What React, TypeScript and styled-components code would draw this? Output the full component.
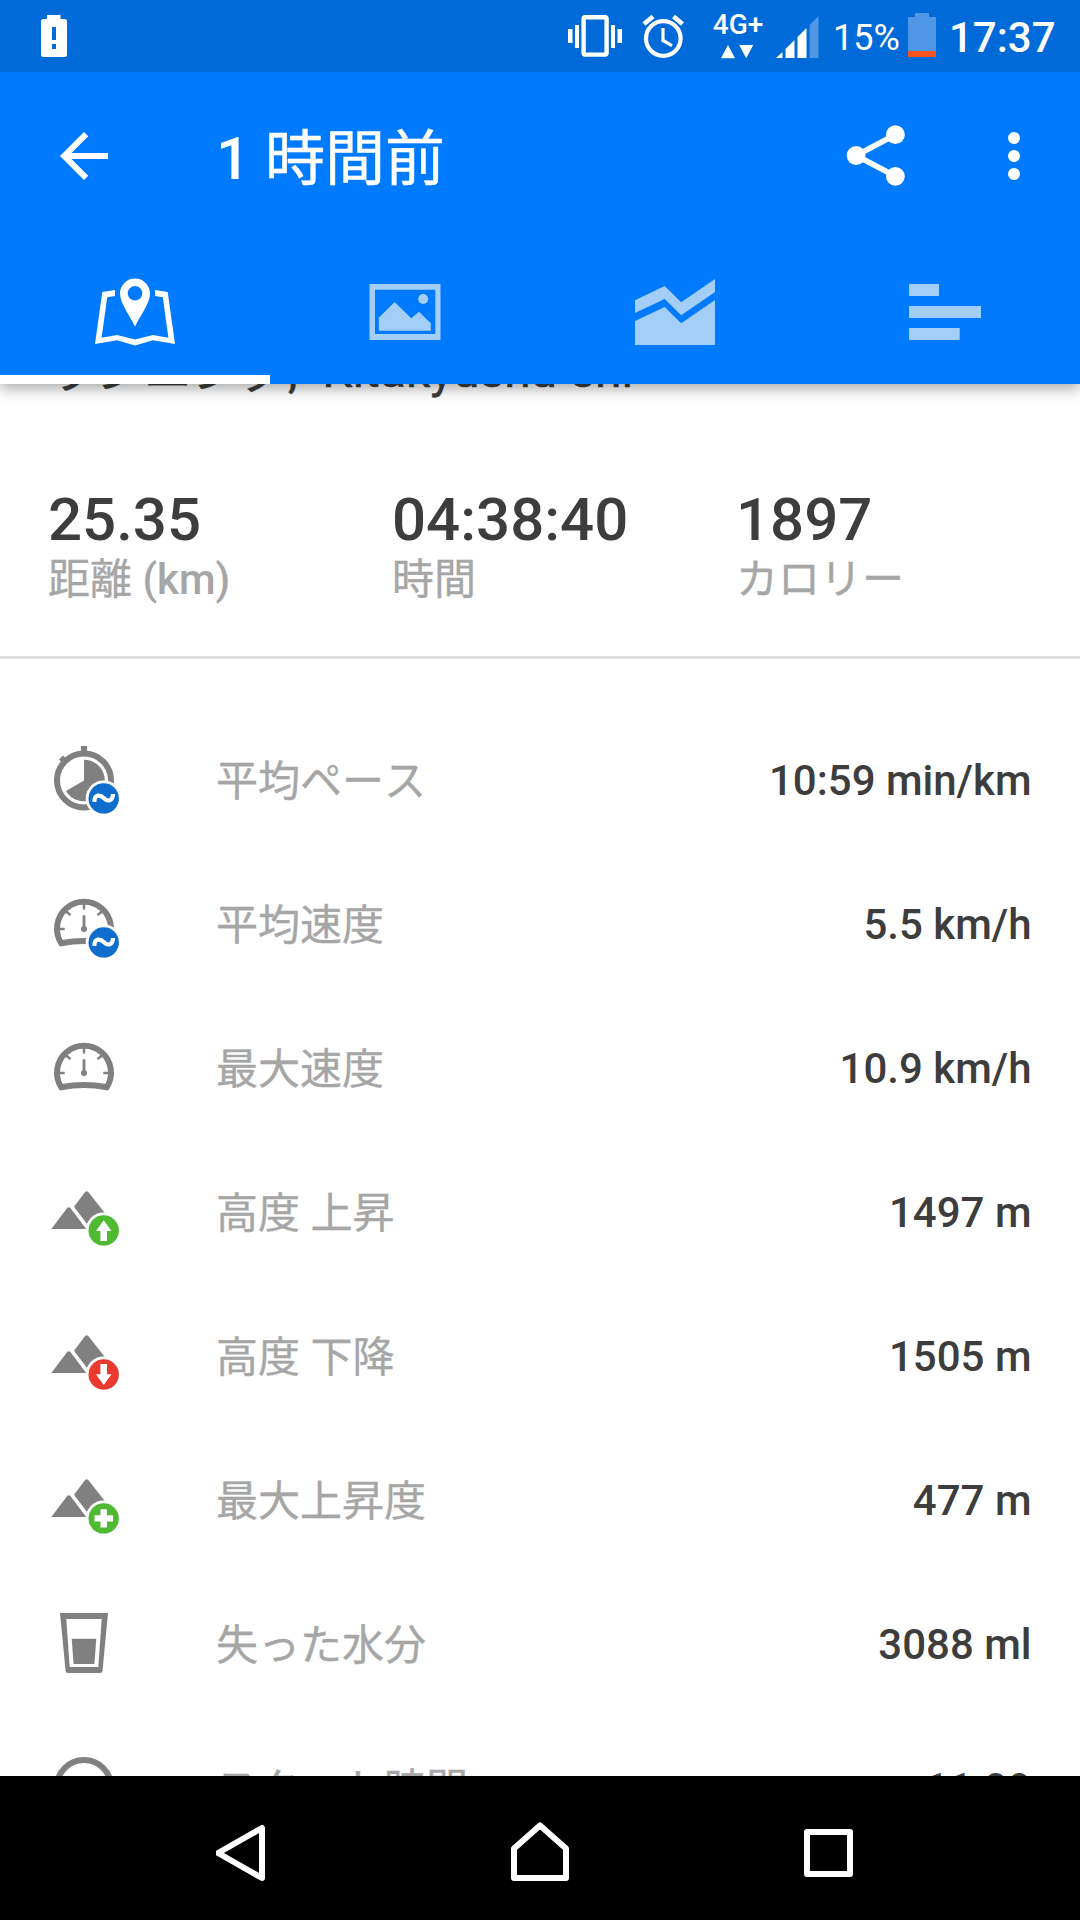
import React from "react";
import styled, { createGlobalStyle } from "styled-components";

const GlobalStyle = createGlobalStyle`
  html, body { margin: 0; padding: 0; background: #fff; }
  * { box-sizing: border-box; }
  svg { display: block; flex: none; }
`;

const Screen = styled.div`
  width: 1080px;
  height: 1920px;
  display: flex;
  flex-direction: column;
  overflow: hidden;
  background: #fff;
  color: #3d3d3d;
  font-family: Roboto, "Noto Sans CJK JP", sans-serif;
  font-weight: 500;
`;

const Header = styled.header`
  flex: none;
  position: relative;
  z-index: 1;
  background: #007aff;
  color: #fff;
  box-shadow: 0 5px 13px rgba(0, 0, 0, 0.33);
`;

const StatusBar = styled.div`
  height: 72px;
  display: flex;
  align-items: flex-start;
  justify-content: space-between;
  padding: 0 25px 0 36px;
  background: #006ad9;
`;

const StatusIcons = styled.div`
  display: flex;
  align-items: flex-start;
`;

const Alerts = styled.div`
  display: flex;
  gap: 18px;
`;

const Network = styled.div`
  width: 50px;
  height: 72px;
  margin: 0 13px 0 28px;
  padding-top: 10px;
  display: flex;
  flex-direction: column;
  align-items: center;
  font-size: 28px;
  line-height: 30px;
`;

const NetworkName = styled.span`
  height: 35px;
  white-space: nowrap;
`;

const BatteryLevel = styled.span`
  margin-left: 13px;
  width: 75px;
  padding-top: 2px;
  font-size: 36px;
  font-weight: 400;
  line-height: 72px;
`;

const Clock = styled.span`
  width: 106px;
  margin-left: 13px;
  padding-top: 2px;
  font-size: 42px;
  line-height: 72px;
`;

const Toolbar = styled.div`
  height: 168px;
  display: flex;
  align-items: center;
  padding: 0 30px 0 48px;
`;

const Title = styled.h1`
  flex: 1;
  margin: 0 0 0 96px;
  padding-top: 6px;
  font-size: 60px;
  font-weight: 500;
  line-height: 72px;
`;

const Actions = styled.div`
  display: flex;
  gap: 60px;
`;

const Tabs = styled.nav`
  height: 144px;
  display: grid;
  grid-template-columns: repeat(4, 1fr);
`;

const Tab = styled.div<{ $active?: boolean }>`
  display: flex;
  align-items: center;
  justify-content: center;
  padding-top: 9px;
  border-bottom: 9px solid ${(p) => (p.$active ? "#fff" : "transparent")};
  color: ${(p) => (p.$active ? "#fff" : "#a3cef8")};
`;

const Content = styled.main`
  flex: 1;
  min-height: 0;
  overflow: hidden;
`;

const Heading = styled.h2`
  height: 60px;
  margin: -43px 0 0;
  padding-left: 48px;
  font-size: 48px;
  font-weight: 400;
  line-height: 60px;
  white-space: pre;
  font-kerning: none;
  word-spacing: 0.5px;
  -webkit-text-stroke: 0.01em currentColor;
`;

const Summary = styled.section`
  display: grid;
  grid-template-columns: repeat(3, 1fr);
  height: 258px;
  padding: 84px 0 0 48px;
  border-bottom: 3px solid #e0e0e0;
`;

const SummaryValue = styled.div`
  font-size: 60px;
  line-height: 70px;
`;

const SummaryLabel = styled.div`
  color: #a6a6a6;
  font-size: 42px;
  line-height: 50px;
`;

const Details = styled.ul`
  margin: 0;
  padding: 49px 0 0;
  list-style: none;
`;

const DetailRow = styled.li`
  height: 144px;
  display: flex;
  align-items: center;
  padding: 0 48.5px 0 48px;
  font-size: 42px;
  line-height: 50px;
`;

const DetailLabel = styled.span`
  flex: 1;
  margin-left: 96px;
  padding-top: 4px;
  color: #a6a6a6;
  font-weight: 400;
  font-kerning: none;
  -webkit-text-stroke: 0.008em currentColor;
`;

const DetailValue = styled.span`
  padding-top: 2px;
`;

const Kanji = styled.span<{ $drop?: number }>`
  font-weight: 400;
  font-kerning: none;
  vertical-align: ${(p) => -(p.$drop ?? 0)}px;
  -webkit-text-stroke: 0.008em currentColor;
`;

const NavigationBar = styled.footer`
  flex: none;
  height: 144px;
  display: flex;
  align-items: center;
  justify-content: center;
  gap: 216px;
  background: #000;
`;

const GRAY = "#808080";

const BatteryAlert = () => (
  <svg width="36" height="72" fill="#fff">
    <path fillRule="evenodd" d="M11 15H24.5V19H28.5Q31 19 31 21.500V54.500Q31 57 28.500 57H7.500Q5 57 5 54.500V21.500Q5 19 7.500 19H11ZM16 27V40H20V27ZM16 44V49H20V44Z" />
  </svg>
);

const Vibrate = () => (
  <svg width="56" height="72" fill="#fff">
    <rect x="16.600" y="17.200" width="23" height="37.400" rx="1.500" fill="none" stroke="#fff" strokeWidth="4.400" />
    <path d="M8 25h4v23H8zM1 29h4.500v14H1zM44 25h4v23h-4zM50.500 29H55v14h-4.500z" />
  </svg>
);

const Alarm = () => (
  <svg width="44" height="72" fill="none" stroke="#fff">
    <circle cx="22.300" cy="38.500" r="17.300" strokeWidth="4.200" />
    <path d="M22 28V40.500L31 45.700" strokeWidth="3.200" />
    <path d="M3 24 12 16.500M32.500 16.500 41.500 24" strokeWidth="4.600" />
  </svg>
);

const DataArrows = () => (
  <svg width="36" height="14" fill="#fff">
    <path d="M1 13.300 8 0l7 13.300zM19.200 0h14L26.200 13.300z" />
  </svg>
);

const Signal = () => (
  <svg width="44" height="72" fill="#fff">
    <path d="M0 58l6.500-6v6zM9.500 58V49L18.500 40V58zM21.500 58V37L30.500 28V58z" />
    <path d="M33.500 58V25L42.500 16V58z" fill="#4f97e6" />
  </svg>
);

const Battery = () => (
  <svg width="28" height="72">
    <path d="M7 13h14v4h7v34H0V17h7z" fill="#4f97e6" />
    <path d="M0 51h28v6H0z" fill="#f9541e" />
  </svg>
);

const BackArrow = () => (
  <svg width="72" height="72" viewBox="0 0 24 24" fill="#fff">
    <path d="M20 11H7.830l5.590-5.590L12 4l-8 8 8 8 1.410-1.410L7.830 13H20z" />
  </svg>
);

const Share = () => (
  <svg width="72" height="72" fill="#fff">
    <path d="M49.400 14.700 10.100 35.500 49.400 56.300" fill="none" stroke="#fff" strokeWidth="5.600" />
    <circle cx="49.400" cy="14.700" r="9.400" />
    <circle cx="10.100" cy="35.500" r="9.400" />
    <circle cx="49.400" cy="56.300" r="9.400" />
  </svg>
);

const More = () => (
  <svg width="72" height="72" fill="#fff">
    <circle cx="36" cy="18" r="6" />
    <circle cx="36" cy="36" r="6" />
    <circle cx="36" cy="54" r="6" />
  </svg>
);

const MapTab = () => (
  <svg width="96" height="96" fill="currentColor">
    <path d="M28 26 15.300 28 8 80 30 76.200 48 81.500 66 76.200 88 80 80.700 28 68 26V32L75.800 33.200 81.400 73.700 66 71 48 75.500 30 71 14.600 73.700 20.200 33.200 28 32Z" />
    <path fillRule="evenodd" d="M48 62.700C44 53 33 40 33 29.500A15 15 0 0 1 63 29.500C63 40 52 53 48 62.700ZM48 22a7.300 7.300 0 1 0 0 14.600a7.300 7.300 0 1 0 0-14.600Z" />
  </svg>
);

const PhotoTab = () => (
  <svg width="96" height="96" fill="currentColor">
    <path fillRule="evenodd" d="M12.500 20H83.500V76H12.500ZM18 25.700V70H78.300V25.700Z" />
    <path d="M21.800 66.700V53.700L37.600 38 54.200 54.300 62 47.700 73.800 59.300V66.700Z" />
    <circle cx="66.200" cy="35" r="5" />
  </svg>
);

const ChartTab = () => (
  <svg width="96" height="96" fill="currentColor">
    <path d="M8 36.300 37.700 22 54.200 38.300 88 15V28L54.200 51.300 37.700 35 8 49Z" />
    <path d="M8 57 37.700 43 54.200 59.300 88 36V81H8Z" />
  </svg>
);

const BarsTab = () => (
  <svg width="96" height="96" fill="currentColor">
    <path d="M12 20H42V32H12ZM12 42H84V54H12ZM12 64H62.700V76H12Z" />
  </svg>
);

const Badge = ({ color, children }: { color: string; children: React.ReactNode }) => (
  <g>
    <circle cx="55.700" cy="54.400" r="18" fill="#fff" />
    <circle cx="55.700" cy="54.400" r="15.200" fill={color} />
    {children}
  </g>
);

const AverageBadge = () => (
  <Badge color="#0f6ecd">
    <path d="M46.300 57.900C46.500 49.500 52.500 50.800 56 54.300S64.800 57.500 65 50" fill="none" stroke="#fff" strokeWidth="4.200" />
  </Badge>
);

const DetailSvg = ({ children }: { children: React.ReactNode }) => (
  <svg width="72" height="72" fill={GRAY}>
    {children}
  </svg>
);

const GaugeShape = () => (
  <g fill="none" stroke={GRAY}>
    <path d="M13.200 55.200A27 27 0 1 1 58.800 55.200Q36 50.800 13.200 55.200Z" strokeWidth="6" />
    <path d="M12 41H16.700M55.300 41H60M36 16V21.500M18 23.500 22.500 27M54 23.500 49.500 27" strokeWidth="2.400" />
    <path d="M36 27.300V41" strokeWidth="2.800" />
    <circle cx="36" cy="41" r="3" fill={GRAY} stroke="none" />
  </g>
);

const Mountains = () => (
  <g>
    <path d="M3.300 53 19 32.300Q20.700 30 22.600 32.300L38.200 53Z" />
    <path d="M26 30.700 36.900 16.300Q38.700 14 40.500 16.300L58 38.500V50H40.500Z" />
  </g>
);

const icons = {
  pace: (
    <DetailSvg>
      <circle cx="36" cy="36.500" r="27" fill="none" stroke={GRAY} strokeWidth="6" />
      <path d="M33 2h6v6h-6zM36 36.500V15.700A20.800 20.800 0 1 1 18 46.900Z" />
      <path d="M11 15.500 15 11.500 19 15.500 15 19.500Z" />
      <AverageBadge />
    </DetailSvg>
  ),
  averageSpeed: (
    <DetailSvg>
      <GaugeShape />
      <AverageBadge />
    </DetailSvg>
  ),
  maxSpeed: (
    <DetailSvg>
      <GaugeShape />
    </DetailSvg>
  ),
  ascent: (
    <DetailSvg>
      <Mountains />
      <Badge color="#4fb932">
        <path d="M55.700 44.300 63.500 55H59V65H52.400V55H48Z" fill="#fff" />
      </Badge>
    </DetailSvg>
  ),
  descent: (
    <DetailSvg>
      <Mountains />
      <Badge color="#e93a30">
        <path d="M55.700 65 63.500 54.300H59V44H52.400V54.300H48Z" fill="#fff" />
      </Badge>
    </DetailSvg>
  ),
  maxAltitude: (
    <DetailSvg>
      <Mountains />
      <Badge color="#4fb932">
        <path d="M46.500 54.400H65M55.700 45.200V63.600" stroke="#fff" strokeWidth="6.400" />
      </Badge>
    </DetailSvg>
  ),
  water: (
    <DetailSvg>
      <path fillRule="evenodd" d="M12 5H60L54.500 63Q54.200 65 52.200 65H19.800Q17.800 65 17.600 63ZM18.300 11 21.700 59H50.300L53.700 11Z" />
      <path d="M23.700 30.700H48.300L46.400 56H25.600Z" />
    </DetailSvg>
  ),
  start: (
    <DetailSvg>
      <circle cx="36" cy="35" r="27" fill="none" stroke={GRAY} strokeWidth="6" />
    </DetailSvg>
  ),
};

const summary = [
  { value: "25.35", label: "距離", unit: " (km)" },
  { value: "04:38:40", label: "時間", unit: "" },
  { value: "1897", label: "カロリー", unit: "" },
];

const details = [
  { icon: icons.pace, label: "平均ペース", value: "10:59 min/km" },
  { icon: icons.averageSpeed, label: "平均速度", value: "5.5 km/h" },
  { icon: icons.maxSpeed, label: "最大速度", value: "10.9 km/h" },
  { icon: icons.ascent, label: "高度 上昇", value: "1497 m" },
  { icon: icons.descent, label: "高度 下降", value: "1505 m" },
  { icon: icons.maxAltitude, label: "最大上昇度", value: "477 m" },
  { icon: icons.water, label: "失った水分", value: "3088 ml" },
  { icon: icons.start, label: "スタート時間", value: "11:09" },
];

const NavIcon = styled.svg.attrs({ width: 72, height: 72 })`
  fill: none;
  stroke: #fff;
  stroke-width: 6px;
  stroke-linejoin: round;
`;

export default function App() {
  return (
    <Screen lang="ja">
      <GlobalStyle />
      <Header>
        <StatusBar>
          <BatteryAlert />
          <StatusIcons>
            <Alerts>
              <Vibrate />
              <Alarm />
            </Alerts>
            <Network>
              <NetworkName>4G+</NetworkName>
              <DataArrows />
            </Network>
            <Signal />
            <BatteryLevel>15%</BatteryLevel>
            <Battery />
            <Clock>17:37</Clock>
          </StatusIcons>
        </StatusBar>
        <Toolbar>
          <BackArrow />
          <Title>
            1 <Kanji $drop={1}>時間前</Kanji>
          </Title>
          <Actions>
            <Share />
            <More />
          </Actions>
        </Toolbar>
        <Tabs>
          <Tab $active>
            <MapTab />
          </Tab>
          <Tab>
            <PhotoTab />
          </Tab>
          <Tab>
            <ChartTab />
          </Tab>
          <Tab>
            <BarsTab />
          </Tab>
        </Tabs>
      </Header>
      <Content>
        <Heading>
          <Kanji $drop={1}>ランニング</Kanji>
          {",  Kitakyushu-shi"}
        </Heading>
        <Summary>
          {summary.map((s) => (
            <div key={s.label}>
              <SummaryValue>{s.value}</SummaryValue>
              <SummaryLabel>
                <Kanji>{s.label}</Kanji>
                {s.unit}
              </SummaryLabel>
            </div>
          ))}
        </Summary>
        <Details>
          {details.map((d) => (
            <DetailRow key={d.label}>
              {d.icon}
              <DetailLabel>{d.label}</DetailLabel>
              <DetailValue>{d.value}</DetailValue>
            </DetailRow>
          ))}
        </Details>
      </Content>
      <NavigationBar>
        <NavIcon>
          <path d="M46 16V66L2 41Z" />
        </NavIcon>
        <NavIcon>
          <path d="M10 66V36.500L36 13.500 62 36.500V66Z" />
        </NavIcon>
        <NavIcon>
          <rect x="15" y="20" width="43" height="42" />
        </NavIcon>
      </NavigationBar>
    </Screen>
  );
}
